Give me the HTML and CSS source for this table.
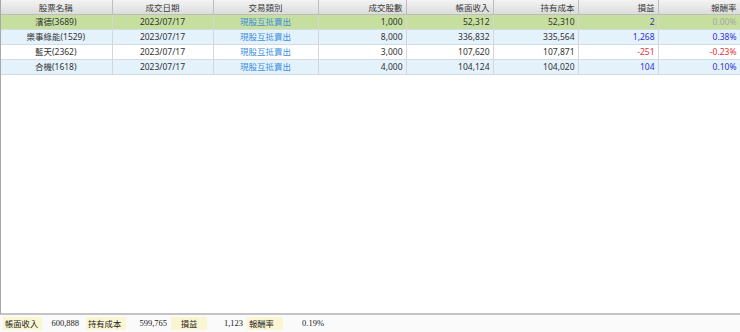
FILE: index.html
```html
<!DOCTYPE html>
<html>
<head>
<meta charset="utf-8">
<link rel="stylesheet" href="styles.css">
</head>
<body>
<div class="app">
  <div class="grid">
    <table class="tbl">
      <colgroup>
        <col style="width:112px"><col style="width:101px"><col style="width:105px"><col style="width:88px">
        <col style="width:87px"><col style="width:85px"><col style="width:80px"><col style="width:82px">
      </colgroup>
      <thead>
        <tr>
          <th class="c">股票名稱</th><th class="c">成交日期</th><th class="c">交易類別</th><th class="r">成交股數</th>
          <th class="r">帳面收入</th><th class="r">持有成本</th><th class="r">損益</th><th class="r">報酬率</th>
        </tr>
      </thead>
      <tbody>
        <tr class="sel">
          <td class="c">濱德(3689)</td><td class="c">2023/07/17</td><td class="c link">現股互抵賣出</td><td class="r">1,000</td>
          <td class="r">52,312</td><td class="r">52,310</td><td class="r pos">2</td><td class="r zero">0.00%</td>
        </tr>
        <tr class="alt">
          <td class="c">樂事綠能(1529)</td><td class="c">2023/07/17</td><td class="c link">現股互抵賣出</td><td class="r">8,000</td>
          <td class="r">336,832</td><td class="r">335,564</td><td class="r pos">1,268</td><td class="r pos">0.38%</td>
        </tr>
        <tr>
          <td class="c">藍天(2362)</td><td class="c">2023/07/17</td><td class="c link">現股互抵賣出</td><td class="r">3,000</td>
          <td class="r">107,620</td><td class="r">107,871</td><td class="r neg">-251</td><td class="r neg">-0.23%</td>
        </tr>
        <tr class="alt">
          <td class="c">合機(1618)</td><td class="c">2023/07/17</td><td class="c link">現股互抵賣出</td><td class="r">4,000</td>
          <td class="r">104,124</td><td class="r">104,020</td><td class="r pos">104</td><td class="r pos">0.10%</td>
        </tr>
      </tbody>
    </table>
  </div>
  <div class="footer">
    <span class="lbl l1">帳面收入</span><span class="val v1">600,888</span>
    <span class="lbl l2">持有成本</span><span class="val v2">599,765</span>
    <span class="lbl l3">損益</span><span class="val v3">1,123</span>
    <span class="lbl l4">報酬率</span><span class="val v4">0.19%</span>
  </div>
</div>
</body>
</html>
```
FILE: styles.css
```css
html, body {
  margin: 0;
  padding: 0;
  background: #ffffff;
}
.app {
  width: 740px;
  height: 332px;
  display: flex;
  flex-direction: column;
  font-family: "Noto Sans", "Noto Sans CJK TC", sans-serif;
  font-size: 8.5px;
  color: #333333;
}
.grid {
  height: 315px;
  border-left: 1px solid #a8a8a8;
  border-bottom: 2px solid #c4c4c4;
  box-sizing: border-box;
  background: #ffffff;
  overflow: hidden;
}
.tbl {
  width: 740px;
  margin-left: -1px;
  table-layout: fixed;
  border-collapse: collapse;
}
.tbl th {
  height: 14px;
  padding: 0 3px;
  font-weight: normal;
  color: #3a3a3a;
  background: linear-gradient(#f3f3f3, #dcdcdc);
  border-right: 1px solid #bdbdbd;
  border-bottom: 1px solid #bdbdbd;
  line-height: 13px;
  white-space: nowrap;
  overflow: hidden;
}
.tbl td {
  height: 14px;
  padding: 0 3px;
  line-height: 14px;
  border-right: 1px solid #d6d6d6;
  border-bottom: 1px solid #d2dbe2;
  white-space: nowrap;
  overflow: hidden;
  color: #333333;
}
.tbl .c { text-align: center; }
.tbl .r { text-align: right; }
.tbl tr.sel td { background: #c6df9f; }
.tbl tr.alt td { background: #e4f2fc; }
.tbl td.link { color: #3d8fdc; }
.tbl td.pos { color: #3030d8; }
.tbl td.neg { color: #e63040; }
.tbl td.zero { color: #a6a6a6; }
.footer {
  height: 17px;
  display: flex;
  align-items: center;
  background: #fafafa;
  font-family: "Liberation Serif", "Noto Sans CJK TC", serif;
  font-size: 8.5px;
  color: #222222;
}
.lbl {
  height: 13px;
  line-height: 13px;
  background: #fbf6d2;
  font-family: "Noto Sans CJK TC", sans-serif;
  font-size: 8.3px;
  padding: 0 2px;
  box-sizing: border-box;
}
.val {
  text-align: right;
  line-height: 13px;
  box-sizing: border-box;
  padding-right: 4px;
}
.l1 { margin-left: 3px; width: 39px; }
.v1 { width: 41px; }
.l2 { margin-left: 3px; width: 40px; }
.v2 { width: 45px; }
.l3 { margin-left: 0; width: 36px; text-align: center; }
.v3 { width: 40px; }
.l4 { margin-left: 0; width: 36px; }
.v4 { width: 45px; }
```
